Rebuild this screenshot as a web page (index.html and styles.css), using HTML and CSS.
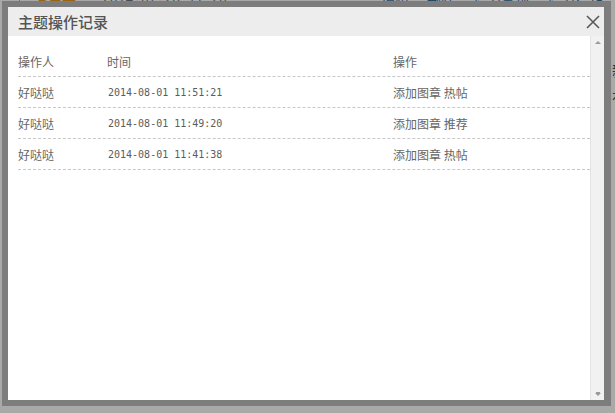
FILE: index.html
```html
<!DOCTYPE html>
<html lang="zh">
<head>
    <meta charset="UTF-8">
    <title>主题操作记录</title>
    <link rel="stylesheet" href="styles.css">
</head>
<body>
    <div class="page">
        <div class="post-meta">
            <span class="author">发布于</span>
            <span class="post-time">2014-07-28 11:20</span>
            <span class="links"><a>编辑</a><a>删除</a><a>设为置顶</a><a>设为精华</a></span>
        </div>
        <div class="side-col">
            <span>新</span>
            <span>布</span>
        </div>
    </div>

    <div class="dialog">
        <div class="dialog-inner">
            <div class="dialog-head">
                <h3>主题操作记录</h3>
                <svg class="close" width="14" height="14" viewBox="0 0 14 14">
                    <path d="M1 1 L13 13 M13 1 L1 13" stroke="#5a5a5a" stroke-width="1.6" fill="none"/>
                </svg>
            </div>
            <div class="dialog-body">
                <div class="log">
                    <div class="log-row log-head">
                        <span>操作人</span><span>时间</span><span>操作</span>
                    </div>
                    <div class="log-row">
                        <span>好哒哒</span><span class="time">2014-08-01 11:51:21</span><span>添加图章 热帖</span>
                    </div>
                    <div class="log-row">
                        <span>好哒哒</span><span class="time">2014-08-01 11:49:20</span><span>添加图章 推荐</span>
                    </div>
                    <div class="log-row">
                        <span>好哒哒</span><span class="time">2014-08-01 11:41:38</span><span>添加图章 热帖</span>
                    </div>
                </div>
                <div class="scrollbar">
                    <div class="arrow-up"></div>
                    <div class="arrow-down"></div>
                </div>
            </div>
        </div>
    </div>
</body>
</html>
```

FILE: styles.css
```css
html, body { margin: 0; padding: 0; }
body { width: 615px; height: 413px; overflow: hidden; background: #a9a9a9; font-family: "Noto Sans CJK SC", "Liberation Sans", sans-serif; position: relative; }

.page { margin-left: 19px; height: 413px; border-left: 1px solid #6f6f6f; box-sizing: border-box; }
.post-meta { display: flex; align-items: center; height: 14px; margin-top: -7px; font-size: 14px; line-height: 14px; }
.author { color: #9a6416; margin-left: 14px; }
.post-time { color: #4c4c4c; margin-left: 26px; font-family: "Liberation Mono", monospace; font-size: 13px; }
.links { margin-left: auto; margin-right: 12px; display: flex; gap: 18px; }
.links a { color: #1f4868; }
.side-col { margin-left: 592px; margin-top: 52px; display: flex; flex-direction: column; gap: 6px; font-size: 15px; color: #333; }

.dialog { position: absolute; left: 2px; top: 1px; width: 609px; height: 405px; background: #7d7d7d; padding: 6px 7px 6px 6px; box-sizing: border-box; }
.dialog-inner { height: 100%; display: flex; flex-direction: column; background: #fff; }
.dialog-head { height: 29px; background: #ededed; display: flex; align-items: center; justify-content: space-between; padding: 0 4px 0 10px; }
.dialog-head h3 { margin: 0; font-size: 15px; font-weight: 500; color: #555; }
.close { display: block; }

.dialog-body { flex: 1; display: flex; }
.log { flex: 1; padding: 10px 0 0 10px; }
.log-row { display: grid; grid-template-columns: 89px 286px 1fr; align-items: center; height: 30px; border-bottom: 1px dashed #c8c8c8; font-size: 12px; color: #666; }
.time { font-family: "DejaVu Sans Mono", monospace; font-size: 10px; color: #5c5c5c; padding-left: 1px; }

.scrollbar { width: 13px; background: #f1f1f1; border-left: 1px solid #e4e4e4; display: flex; flex-direction: column; justify-content: space-between; align-items: center; padding: 5px 0 4px; }
.arrow-up { width: 0; height: 0; border-left: 3px solid transparent; border-right: 3px solid transparent; border-bottom: 3px solid #9a9a9a; }
.arrow-down { width: 0; height: 0; border-left: 3px solid transparent; border-right: 3px solid transparent; border-top: 3px solid #9a9a9a; box-shadow: 0 -2px 0 -1px #9a9a9a; }
```
